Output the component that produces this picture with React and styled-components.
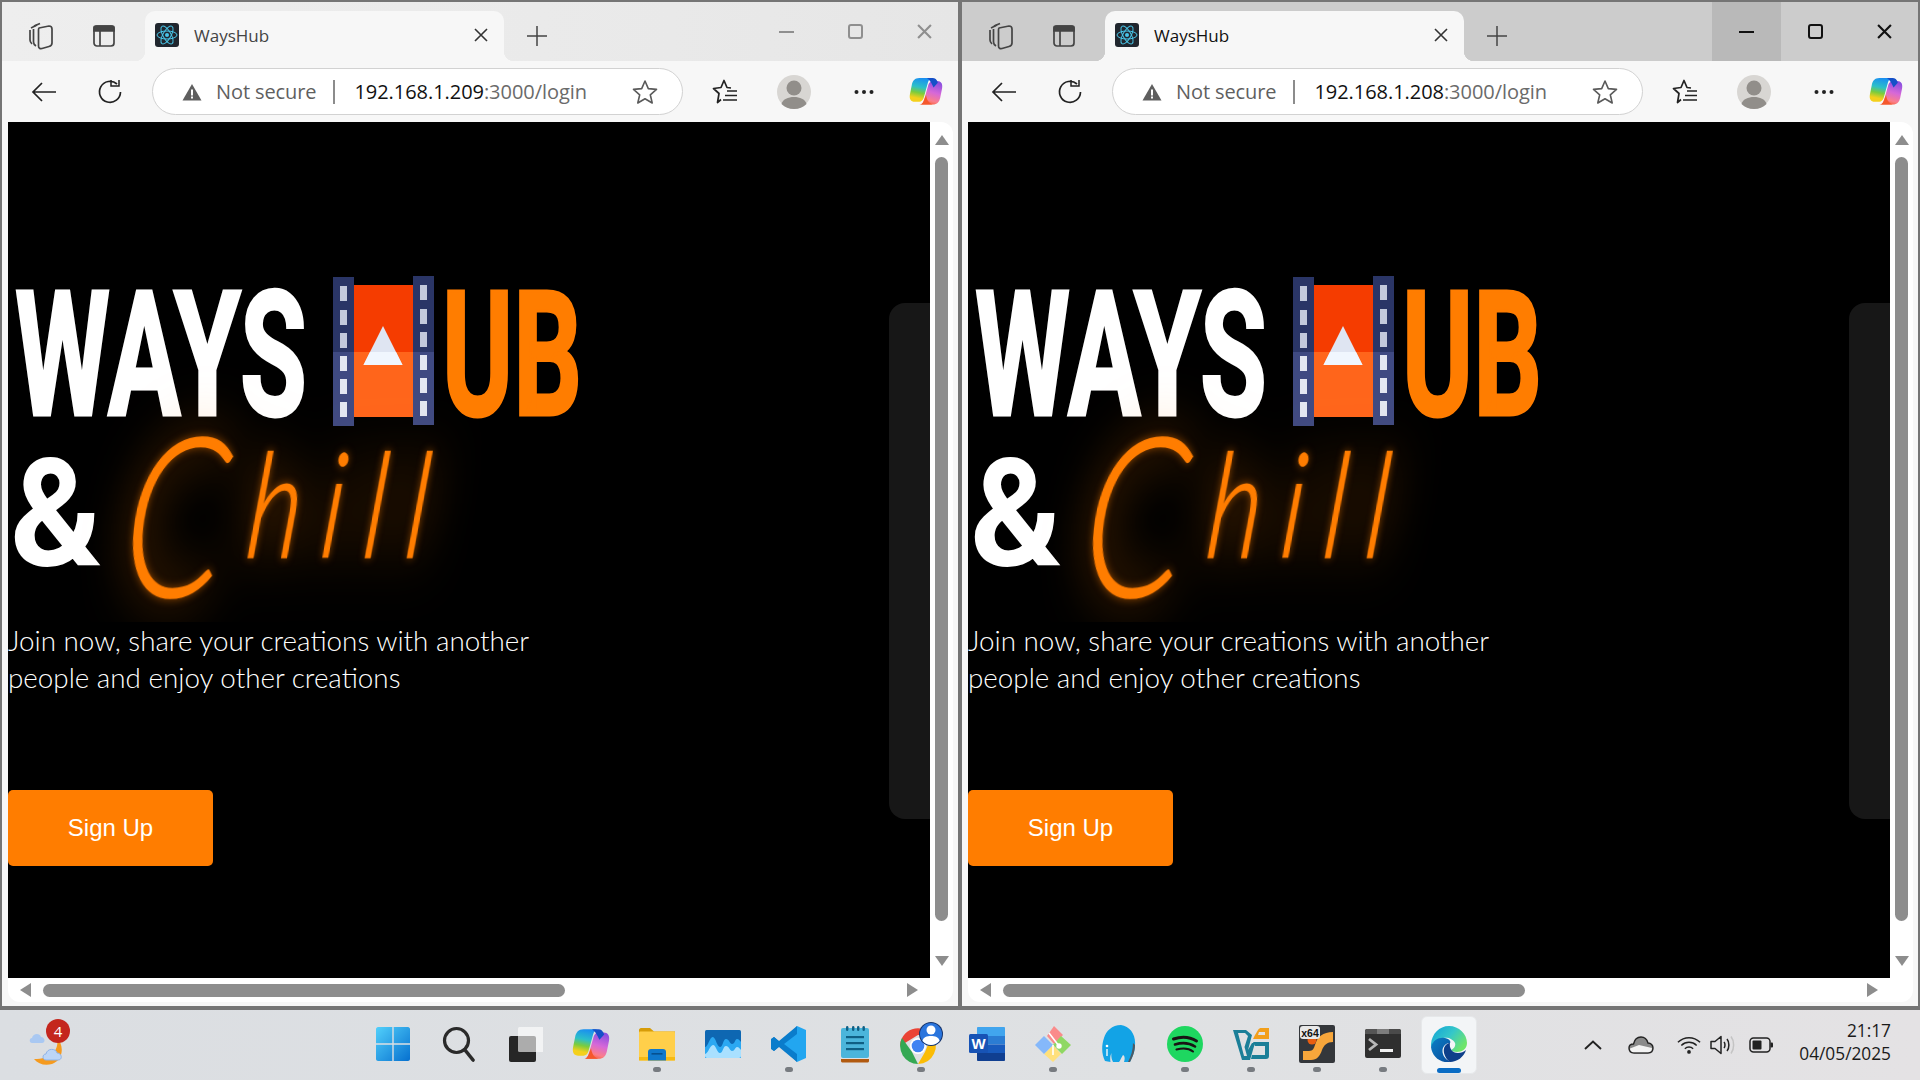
import React from 'react';
import styled, { createGlobalStyle } from 'styled-components';

const GlobalStyle = createGlobalStyle`
	html, body { margin: 0; padding: 0; background: #dcdfe3; overflow: hidden; }
	* { box-sizing: border-box; }
	svg { display: block; }
`;

const ORANGE = '#ff7d00';
const UI_FONT = '"Open Sans", "Noto Sans", sans-serif';

// ---------- chrome icons ----------
const Workspaces = () => (
	<svg width="26" height="28" viewBox="0 0 26 28" fill="none" stroke="#444" strokeWidth="1.7" strokeLinejoin="round">
		<path d="M3 6 L9 3 M2 8 V18 C2 20 3 21 4 22" />
		<path d="M6 4 L12 1.5 M5.5 7 V20 C5.5 22 6.5 23 8 24" />
		<path d="M11 6 L21 4 C23 4 24 5 24 7 V21 C24 23 23 24 21 24.5 L14 26.5 C12 27 10.5 26 10.5 24 V8 C10.5 7 10.5 6.5 11 6 Z" />
	</svg>
);

const TabList = () => (
	<svg width="22" height="22" viewBox="0 0 22 22" fill="none" stroke="#444" strokeWidth="1.7">
		<rect x="1" y="1" width="20" height="20" rx="3" />
		<path d="M1 2.5 C1 1.5 2 1 3 1 H19 C20 1 21 1.5 21 2.5 V6 H1 Z" fill="#444" />
		<path d="M7 6 V21" />
	</svg>
);

const ReactFav = () => (
	<svg width="24" height="24" viewBox="0 0 24 24" fill="none" stroke="#49c6e8" strokeWidth="1">
		<rect width="24" height="24" rx="3" fill="#20262e" stroke="none" />
		<ellipse cx="12" cy="12" rx="10" ry="4" />
		<ellipse cx="12" cy="12" rx="10" ry="4" transform="rotate(60 12 12)" />
		<ellipse cx="12" cy="12" rx="10" ry="4" transform="rotate(120 12 12)" />
		<circle cx="12" cy="12" r="2" fill="#49c6e8" stroke="none" />
	</svg>
);

const CloseX = ({ size = 14, color = '#333', width = 1.6 }) => (
	<svg width={size} height={size} viewBox="0 0 14 14" stroke={color} strokeWidth={width}>
		<path d="M1 1 L13 13 M13 1 L1 13" />
	</svg>
);

const Plus = () => (
	<svg width="22" height="22" viewBox="0 0 22 22" stroke="#444" strokeWidth="1.5">
		<path d="M11 1 V21 M1 11 H21" />
	</svg>
);

const Back = () => (
	<svg width="26" height="22" viewBox="0 0 26 22" fill="none" stroke="#222" strokeWidth="1.7">
		<path d="M25 11 H2 M11 2 L2 11 L11 20" />
	</svg>
);

const Reload = () => (
	<svg width="26" height="26" viewBox="0 0 26 26" fill="none" stroke="#222" strokeWidth="1.7">
		<path d="M20 5 A10.5 10.5 0 1 0 23.5 13" />
		<path d="M14 1 V7 H22 V1" strokeWidth="1.5" />
	</svg>
);

const Warning = () => (
	<svg width="20" height="18" viewBox="0 0 20 18">
		<path d="M10 1 L19.5 17.5 H0.5 Z" fill="#5f5f5f" />
		<rect x="9" y="6.5" width="2" height="6" fill="#fff" />
		<rect x="9" y="13.5" width="2" height="2" fill="#fff" />
	</svg>
);

const Star = () => (
	<svg width="26" height="26" viewBox="0 0 26 26" fill="none" stroke="#5a5a5a" strokeWidth="1.6" strokeLinejoin="round">
		<path d="M13 2 L16.3 9.6 L24.5 10.4 L18.3 15.8 L20.2 24 L13 19.7 L5.8 24 L7.7 15.8 L1.5 10.4 L9.7 9.6 Z" />
	</svg>
);

const Favorites = () => (
	<svg width="26" height="26" viewBox="0 0 26 26" fill="none" stroke="#222" strokeWidth="1.7" strokeLinejoin="round">
		<path d="M9 20.5 L5.5 23.5 L7 14.5 L1.5 9.5 L9 8.5 L12 1.5 L15 8.5 L19 9" />
		<path d="M15 12 H25 M13 16.5 H25 M11 21 H25" />
	</svg>
);

const Avatar = () => (
	<svg width="34" height="34" viewBox="0 0 34 34">
		<circle cx="17" cy="17" r="17" fill="#d8d6d3" />
		<circle cx="17" cy="13" r="7.5" fill="#918e8a" />
		<path d="M4.5 29 C6 24 11 22 17 22 C23 22 28 24 29.5 29 C26 32.5 22 34 17 34 C12 34 8 32.5 4.5 29 Z" fill="#918e8a" />
	</svg>
);

const Dots = () => (
	<svg width="20" height="6" viewBox="0 0 20 6" fill="#222">
		<circle cx="2.5" cy="3" r="2" />
		<circle cx="10" cy="3" r="2" />
		<circle cx="17.5" cy="3" r="2" />
	</svg>
);

const Copilot = ({ size = 34 }) => (
	<svg width={size} height={size * 0.9} viewBox="0 0 36 32">
		<defs>
			<linearGradient id="copA" x1="0.5" y1="0" x2="0.3" y2="1">
				<stop offset="0" stopColor="#1a8ff0" />
				<stop offset="0.38" stopColor="#2cc0c8" />
				<stop offset="0.62" stopColor="#7ccc3c" />
				<stop offset="0.85" stopColor="#f4d01c" />
			</linearGradient>
			<linearGradient id="copB" x1="0.6" y1="0" x2="0.3" y2="1">
				<stop offset="0" stopColor="#8a4fe0" />
				<stop offset="0.45" stopColor="#d668d8" />
				<stop offset="0.8" stopColor="#fb7f8a" />
				<stop offset="1" stopColor="#f5582c" />
			</linearGradient>
		</defs>
		<path d="M11 2 C6 2 4 5 3 9 L1 19 C0 24 2 27 6 27 H11 C13 27 15 25 15.5 23 L20 7 C21 4 22 2 25 2 Z" fill="url(#copA)" />
		<path d="M25 30 C30 30 32 27 33 23 L35 13 C36 8 34 5 30 5 H25 C23 5 21 7 20.5 9 L16 25 C15 28 14 30 11 30 Z" fill="url(#copB)" />
		<path d="M19 2 H25 C27.5 2 29.5 3.5 30.5 7 L26 12 C24 8 23 5 19 2 Z" fill="#1550c8" />
		<path d="M11 30 C14 30 15 28 16 25 L18 20 C19 25 20 28 25 30 Z" fill="#f5582c" />
	</svg>
);

// ---------- taskbar icons ----------
const StartIcon = () => (
	<svg width="36" height="36" viewBox="0 0 36 36">
		<defs>
			<linearGradient id="startG" x1="0" y1="0" x2="1" y2="1">
				<stop offset="0" stopColor="#52d0fb" />
				<stop offset="1" stopColor="#0670cf" />
			</linearGradient>
		</defs>
		<path d="M1 3 C1 2 2 1 3 1 H17.3 V17.3 H1 Z M18.7 1 H33 C34 1 35 2 35 3 V17.3 H18.7 Z M1 18.7 H17.3 V35 H3 C2 35 1 34 1 33 Z M18.7 18.7 H35 V33 C35 34 34 35 33 35 H18.7 Z" fill="url(#startG)" />
	</svg>
);

const SearchIcon = () => (
	<svg width="36" height="36" viewBox="0 0 36 36" fill="none" stroke="#2a2a2a">
		<circle cx="15.5" cy="14.5" r="12" strokeWidth="3.2" />
		<path d="M24 24 L32 34" strokeWidth="3.6" strokeLinecap="round" />
	</svg>
);

const TaskViewIcon = () => (
	<svg width="36" height="36" viewBox="0 0 36 36">
		<rect x="2" y="10" width="27" height="26" rx="2" fill="#262626" />
		<rect x="11" y="1" width="26" height="25" rx="1.5" fill="#fff" fillOpacity="0.62" />
	</svg>
);

const ExplorerIcon = () => (
	<svg width="36" height="34" viewBox="0 0 36 34">
		<path d="M0 3 C0 2 1 1 2 1 H11 L15 4.5 H36 V10 H0 Z" fill="#d79c08" />
		<rect y="4.5" width="36" height="29" rx="1" fill="#ffcf4a" />
		<rect y="30" width="36" height="3.5" fill="#f6ba12" />
		<path d="M9 33.5 V25 C9 23 10 22 12 22 H24 C26 22 27 23 27 25 V33.5 Z" fill="#0f78cc" />
		<rect x="12.5" y="26" width="11" height="1.6" fill="#06508f" />
	</svg>
);

const PhotosIcon = () => (
	<svg width="36" height="28" viewBox="0 0 36 28">
		<rect width="36" height="28" rx="1.5" fill="#0e67b2" />
		<path d="M0 17 C3 17 5 6 8 7 C11 8 12 17 15 17 C18 17 18 9 21 9 C24 9 25 14 27 14 C30 14 30 9 32 9 C34 9 35 11 36 12 V28 H0 Z" fill="#2ba8f2" />
		<path d="M0 24 C3 24 5 15 8 15 C11 15 12 23 15 23 C18 23 18 16 21 16 C24 16 25 21 27 21 C30 21 30 17 32 17 C34 17 35 19 36 20 V26 C36 27 35 28 34 28 H2 C1 28 0 27 0 26 Z" fill="#a9e0ff" />
	</svg>
);

const VsCodeIcon = () => (
	<svg width="36" height="38" viewBox="0 0 36 38">
		<path d="M26 1 L35 5 V33 L26 37 L10 21 Z" fill="#22a6f0" />
		<path d="M26 1 L26 9 L13 19 L26 29 V37 L8 22 L3 26 L0 24 V14 L3 12 L8 16 Z" fill="#0a7ccb" />
		<path d="M3 12 L0 14.5 V23.5 L3 26 L8 21.5 V16.5 Z" fill="#0a7ccb" />
	</svg>
);

const NotepadIcon = () => (
	<svg width="28" height="37" viewBox="0 0 28 37">
		<rect y="2" width="28" height="30" rx="2" fill="#4bb5db" />
		<path d="M0 33 H28 V35 C28 36 27 36.5 26 36.5 H2 C1 36.5 0 36 0 35 Z" fill="#b15a10" />
		<g fill="#0f5f84">
			<rect x="5" y="0" width="2.4" height="5" rx="1.2" />
			<rect x="11" y="0" width="2.4" height="5" rx="1.2" />
			<rect x="16" y="0" width="2.4" height="5" rx="1.2" />
			<rect x="21.5" y="0" width="2.4" height="5" rx="1.2" />
			<rect x="5" y="10" width="18" height="2.2" />
			<rect x="5" y="16" width="18" height="2.2" />
			<rect x="5" y="22" width="18" height="2.2" />
		</g>
	</svg>
);

const ChromeIcon = () => (
	<svg width="46" height="46" viewBox="0 0 46 46">
		<path d="M2 25 A18 18 0 0 1 34 14 L20 14 Z" fill="#ea4335" />
		<path d="M20 43 A18 18 0 0 1 4 17 L14 31 Z" fill="#34a853" />
		<path d="M34 14 A18 18 0 0 1 20 43 L27 31 Z" fill="#fbbc05" />
		<circle cx="20" cy="25" r="8" fill="#fff" />
		<circle cx="20" cy="25" r="6.3" fill="#3f83f2" />
		<circle cx="33" cy="13" r="12" fill="#16336b" />
		<circle cx="33" cy="13" r="11" fill="#2a75dd" />
		<circle cx="33" cy="9" r="4.5" fill="#fff" />
		<path d="M24.5 20 C25 16 29 15 33 15 C37 15 41 16 41.5 20 C39 22.5 36 24 33 24 C30 24 27 22.5 24.5 20 Z" fill="#fff" />
	</svg>
);

const WordIcon = () => (
	<svg width="36" height="34" viewBox="0 0 36 34">
		<path d="M8 1 C8 0.5 8.5 0 9 0 H35 C35.5 0 36 0.5 36 1 V9 H8 Z" fill="#41a5ee" />
		<rect x="8" y="9" width="28" height="8.5" fill="#2b7cd3" />
		<rect x="8" y="17.5" width="28" height="8.5" fill="#185abd" />
		<path d="M8 26 H36 V33 C36 33.5 35.5 34 35 34 H9 C8.5 34 8 33.5 8 33 Z" fill="#103f91" />
		<rect y="7" width="19" height="19" rx="1.5" fill="#1753b5" />
		<text x="9.5" y="22" textAnchor="middle" fontFamily="Liberation Sans, sans-serif" fontWeight="700" fontSize="15" fill="#fff">W</text>
	</svg>
);

const GitIcon = () => (
	<svg width="36" height="38" viewBox="0 0 36 38">
		<path d="M18 2 L27 11 L18 20 L11 12 Z" fill="#fa8b8b" transform="translate(1 -1)" />
		<path d="M26 11 L36 20 L27 29 L18 20 Z" fill="#8fd863" />
		<path d="M18 20 L26 29 L18 37 L9 29 Z" fill="#ffe07c" />
		<path d="M9 11 L18 20 L9 29 L0 20 Z" fill="#85b8fa" />
		<circle cx="24" cy="21" r="2.7" fill="#fff" />
		<path d="M14 8 L24 21 M18 20 L18 30" stroke="#fff" strokeWidth="1.6" />
	</svg>
);

const ElephantIcon = () => (
	<svg width="34" height="38" viewBox="0 0 34 38">
		<path d="M19 0 C28 1 34 10 33 20 C33 27 30 33 28 37 L22 37 C23 34 23 31 21 30 C19 33 18 36 17 37 L11 37 C9.5 34 9 31 9.5 28 C8 31 8 34 8.5 37 L3 36 C0 30 -1 22 2 13 C4 6 10 0 19 0 Z" fill="#12a3e6" />
		<path d="M33 20 C33 27 30 33 28 37 L26 37 C29 31 31 25 31 18 Z" fill="#4d5a63" />
		<circle cx="5" cy="21" r="1.3" fill="#fff" />
		<path d="M5 24 V31" stroke="#fff" strokeWidth="1.3" />
	</svg>
);

const SpotifyIcon = () => (
	<svg width="36" height="36" viewBox="0 0 36 36" fill="none" stroke="#191414" strokeLinecap="round">
		<circle cx="18" cy="18" r="18" fill="#1ed760" stroke="none" />
		<path d="M6.5 13 C14 10.5 23 11 29.5 15" strokeWidth="3" />
		<path d="M8 18.5 C14.5 16.5 22.5 17 28 20.5" strokeWidth="2.6" />
		<path d="M9.5 23.5 C15 22 22 22.3 26 25.5" strokeWidth="2.1" />
	</svg>
);

const VsLogoIcon = () => (
	<svg width="36" height="32" viewBox="0 0 36 32">
		<path d="M0 2 H13 L19 7 L15 22 L19 15 H22 L17 32 H9 Z M5 5 L11 28 H14 L11.5 19 L15 8 L12 5 Z" fill="#1b7f98" />
		<path d="M22 7 L25 2 C26 0.5 27 0 28 0 H36 V11 H20 Z M26 4 L25 7 H32 V4 Z" fill="#f29f1a" />
		<path d="M20 14 H36 V28 C36 30 35 31 33 31 H18 L19 27 H32 V18 H22 Z" fill="#1b7f98" />
	</svg>
);

const X64Icon = () => (
	<svg width="36" height="38" viewBox="0 0 36 38">
		<rect width="36" height="38" rx="2" fill="#34373b" />
		<path d="M34 7 V17 C28 17 25 20 23 25 C21 31 18 35 12 35 H4 V26 H10 C14 26 15 23 16 20 C18 12 24 7 34 7 Z" fill="#f7a63b" />
		<circle cx="13" cy="15" r="4.5" fill="#e85d10" />
		<rect x="1" y="1" width="20" height="13" rx="3" fill="#e8e8e8" />
		<text x="11" y="11.5" textAnchor="middle" fontFamily="Liberation Sans, sans-serif" fontWeight="700" fontSize="10.5" fill="#111">x64</text>
	</svg>
);

const TerminalIcon = () => (
	<svg width="36" height="30" viewBox="0 0 36 30">
		<rect width="36" height="29" rx="2" fill="#2f2f2f" />
		<path d="M2 0 H12 V5 H0 V2 C0 1 1 0 2 0 Z" fill="#555" />
		<rect x="12" y="0" width="12" height="5" fill="#7c7c7c" />
		<path d="M24 0 H34 C35 0 36 1 36 2 V5 H24 Z" fill="#4a4a4a" />
		<path d="M4 10 L11 15.5 L4 21" fill="none" stroke="#b8b8b8" strokeWidth="2.8" />
		<rect x="15" y="20" width="13" height="3" fill="#f0f0f0" />
	</svg>
);

const EdgeIcon = () => (
	<svg width="36" height="36" viewBox="0 0 36 36">
		<defs>
			<linearGradient id="edgeA" x1="0" y1="0" x2="1" y2="0.6">
				<stop offset="0" stopColor="#0fa0d8" />
				<stop offset="0.55" stopColor="#35c7c9" />
				<stop offset="1" stopColor="#6fe56a" />
			</linearGradient>
			<linearGradient id="edgeB" x1="0" y1="0" x2="1" y2="1">
				<stop offset="0" stopColor="#0a7fc6" />
				<stop offset="1" stopColor="#0b4a9a" />
			</linearGradient>
		</defs>
		<path d="M18 0 C28 0 36 8 36 17 C36 23 31 26 26 26 C23 26 21 25 20 24 C23 23 25 20 24 17 C22 13 17 11 12 12 C6 13 1 17 0 22 C-1 10 7 0 18 0 Z" fill="url(#edgeA)" />
		<path d="M0 21 C2 14 8 11 14 12 C19 13 20 16 19 17 C14 17 10 22 12 28 C13 32 17 35 21 36 C10 38 1 31 0 21 Z" fill="url(#edgeB)" />
		<path d="M13 27 C12 21 15 17.5 19 17 C18 22 21 27 27 27 C30 27 33 26 35 24 C33 31 26 36 19 36 C16 34 14 31 13 27 Z" fill="#0e3f8a" />
	</svg>
);

const WeatherIcon = () => (
	<svg width="38" height="42" viewBox="0 0 38 42">
		<path d="M27 13 C31 22 27 36 5 36 C9 41 16 43 23 41 C33 38 37 24 27 13 Z" fill="#f59a1e" />
		<path d="M3 20 C0 20 0 15 3 15 C4 10 11 10 12 14 C16 14 17 20 13 20 Z" fill="#a9c8f2" />
		<path d="M17 37 C13 37 13 31 17 31 C18 25 27 25 28 30 C33 30 34 37 29 37 Z" fill="#bcd5f7" stroke="#8fb4e8" strokeWidth="1" />
	</svg>
);

// ---------- tray icons ----------
const Chevron = () => (
	<svg width="18" height="10" viewBox="0 0 18 10" fill="none" stroke="#222" strokeWidth="1.9">
		<path d="M1 9 L9 1.5 L17 9" />
	</svg>
);

const Cloud = () => (
	<svg width="26" height="18" viewBox="0 0 26 18">
		<path d="M6 17 C2 17 1 14 1 12 C1 9.5 3 8 5.5 8 C6.5 3.5 9.5 1 13 1 C16.5 1 19 3.5 20 7 C23 7 25 9.5 25 12 C25 15 23 17 20 17 Z" fill="#8b8b8b" stroke="#222" strokeWidth="1.4" />
		<path d="M6 16.3 C3 16.3 2 14 2 12.5 L11 9 L24 12 C24 15 22 16.3 20 16.3 Z" fill="#f3f3f3" />
	</svg>
);

const Wifi = () => (
	<svg width="26" height="20" viewBox="0 0 26 20" fill="none" stroke="#222" strokeWidth="1.6">
		<path d="M1 7 C8 0.5 18 0.5 25 7" />
		<path d="M4.7 10.5 C9.5 6 16.5 6 21.3 10.5" />
		<path d="M8.5 14 C11 11.7 15 11.7 17.5 14" />
		<circle cx="13" cy="17.5" r="2" fill="#222" stroke="none" />
	</svg>
);

const Speaker = () => (
	<svg width="26" height="20" viewBox="0 0 26 20" fill="none" stroke="#222" strokeWidth="1.5">
		<path d="M1 6.5 H5 L11 1.5 V18.5 L5 13.5 H1 Z" strokeLinejoin="round" />
		<path d="M14 7 C15.3 8.5 15.3 11.5 14 13" />
		<path d="M17 4 C19.5 7 19.5 13 17 16" />
		<path d="M21 1.5 C24.5 6 24.5 14 21 18.5" stroke="#c4c4c4" />
	</svg>
);

const Battery = () => (
	<svg width="24" height="16" viewBox="0 0 24 16">
		<rect x="1" y="1" width="20" height="14" rx="3.5" fill="none" stroke="#222" strokeWidth="1.5" />
		<rect x="3.5" y="3.5" width="9" height="9" rx="1" fill="#222" />
		<rect x="21.5" y="5.5" width="2.5" height="5" rx="1" fill="#222" />
	</svg>
);

// ---------- logo ----------
const FILM_HOLES = [286, 310, 333, 356, 379, 402];

const LogoSvg = styled.svg`
	flex: none;
`;

const HeavyText = styled.text`
	font-family: Roboto, "Liberation Sans", sans-serif;
	font-weight: 700;
	stroke-linejoin: miter;
`;

const ScriptText = styled.text`
	font-family: Lato, "Liberation Sans", sans-serif;
	font-style: italic;
	font-weight: 300;
	fill: ${ORANGE};
	stroke: ${ORANGE};
	stroke-width: 1.5px;
	filter: drop-shadow(0 0 5px rgba(255, 125, 0, 0.5)) drop-shadow(0 0 30px rgba(255, 125, 0, 0.55));
`;

const HillSpan = styled.tspan`
	letter-spacing: 28px;
`;

// origin of the svg is (8, 262) on the page
const Logo = () => (
	<LogoSvg width="600" height="360" viewBox="0 0 600 360">
		<HeavyText x="7" y="152.5" fontSize="174" fill="#fff" stroke="#fff" strokeWidth="3" textLength="292" lengthAdjust="spacingAndGlyphs">WAYS</HeavyText>
		<rect x="325" y="15" width="21" height="75" fill="#2a3566" />
		<rect x="325" y="90" width="21" height="74" fill="#3f4a82" />
		<rect x="346" y="23" width="61" height="67" fill="#f53c00" />
		<rect x="346" y="90" width="61" height="65" fill="#ff651b" />
		<rect x="405" y="14" width="21" height="76" fill="#2a3566" />
		<rect x="405" y="90" width="21" height="73" fill="#3f4a82" />
		{FILM_HOLES.map((y) => (
			<g key={y} fill={y < 350 ? '#c3c9dc' : '#e3e7f2'}>
				<rect x="332" y={y - 262} width="7" height="15" />
				<rect x="412" y={y - 263} width="7" height="15" />
			</g>
		))}
		<path d="M375 64 L394.5 103 H355.5 Z" fill="#dfe5f2" />
		<path d="M362 90 H388 L394.5 103 H355.5 Z" fill="#f0f6fe" />
		<HeavyText x="434" y="152.5" fontSize="174" fill={ORANGE} stroke={ORANGE} strokeWidth="3" textLength="140" lengthAdjust="spacingAndGlyphs">UB</HeavyText>
		<HeavyText x="2" y="303" fontSize="150" fill="#fff" textLength="92" lengthAdjust="spacingAndGlyphs">&amp;</HeavyText>
		<ScriptText transform="translate(144 0) scale(0.72 1) skewX(-8)" fontSize="146">
			<tspan x="0" y="334" fontSize="222">C</tspan>
			<HillSpan x="169" y="296">hill</HillSpan>
		</ScriptText>
	</LogoSvg>
);

// ---------- browser ----------
const Window = styled.div`
	width: 960px;
	height: 1010px;
	border: solid #757575;
	border-width: 2px 2px 4px 2px;
	background: #f7f7f7;
	display: flex;
	flex-direction: column;
	font-family: ${UI_FONT};
`;

const TabStrip = styled.div`
	height: 59px;
	display: flex;
	align-items: flex-end;
	padding-left: 8px;
	background: ${(p) => (p.$active ? '#cccccc' : 'linear-gradient(to right, #eeeeee, #e9e9e9 70%, #e6e6e6)')};
`;

const StripButton = styled.div`
	width: ${(p) => p.$w || 62}px;
	height: 50px;
	flex: none;
	display: flex;
	align-items: center;
	justify-content: center;
	margin-left: ${(p) => p.$ml || 0}px;
`;

const Tab = styled.div`
	width: 359px;
	height: 50px;
	flex: none;
	margin-left: 10px;
	padding: 0 16px 2px 10px;
	position: relative;
	display: flex;
	align-items: center;
	background: #f7f7f7;
	border-radius: 10px 10px 0 0;
	&::before, &::after {
		content: '';
		position: absolute;
		bottom: 0;
		width: 10px;
		height: 10px;
	}
	&::before {
		left: -10px;
		background: radial-gradient(circle at 0 0, transparent 10px, #f7f7f7 10.5px);
	}
	&::after {
		right: -10px;
		background: radial-gradient(circle at 100% 0, transparent 10px, #f7f7f7 10.5px);
	}
`;

const TabTitle = styled.span`
	flex: 1;
	margin-left: 15px;
	font-size: 17px;
	color: ${(p) => (p.$active ? '#111' : '#444')};
`;

const WinControls = styled.div`
	margin-left: auto;
	margin-right: -1px;
	align-self: stretch;
	display: flex;
`;

const WinButton = styled.div`
	width: 69px;
	display: flex;
	align-items: center;
	justify-content: center;
	background: ${(p) => (p.$hover ? '#b9b9b9' : 'transparent')};
`;

const MinLine = styled.div`
	width: 15px;
	height: 2px;
	background: ${(p) => p.$color};
`;

const MaxBox = styled.div`
	width: 15px;
	height: 15px;
	border: 2px solid ${(p) => p.$color};
	border-radius: 3px;
`;

const Toolbar = styled.div`
	height: 61px;
	flex: none;
	display: flex;
	align-items: center;
	padding-left: 9px;
`;

const ToolButton = styled.div`
	width: ${(p) => p.$w || 66}px;
	height: 47px;
	flex: none;
	display: flex;
	align-items: center;
	justify-content: center;
`;

const Address = styled.div`
	width: 531px;
	height: 47px;
	flex: none;
	margin: 0 8px 0 9px;
	padding: 0 24px 0 29px;
	display: flex;
	align-items: center;
	background: #fff;
	border: 1.5px solid #d2d2d2;
	border-radius: 24px;
	font-size: 20px;
`;

const NotSecure = styled.span`
	margin-left: 14px;
	color: #5f5f5f;
	letter-spacing: -0.1px;
`;

const Divider = styled.div`
	width: 2px;
	height: 24px;
	margin: 0 19px 0 17px;
	background: #8c8c8c;
`;

const Url = styled.span`
	flex: 1;
	color: #6a6a6a;
	white-space: nowrap;
	letter-spacing: -0.05px;
	b {
		font-weight: 400;
		color: #111;
	}
`;

const Viewport = styled.div`
	width: 945px;
	height: 880px;
	margin-left: 6px;
	background: #fff;
	border-radius: 0 12px 12px 12px;
	overflow: hidden;
	display: flex;
	flex-direction: column;
`;

const ViewRow = styled.div`
	height: 856px;
	display: flex;
`;

const Page = styled.div`
	width: 922px;
	flex: none;
	position: relative;
	background: #000;
	padding-top: 140px;
`;

const SidePanel = styled.div`
	position: absolute;
	right: 0;
	top: 181px;
	width: 41px;
	height: 516px;
	background: #171717;
	border-radius: 16px 0 0 16px;
`;

const Tagline = styled.p`
	margin: 0;
	width: 540px;
	color: #fff;
	font-family: Lato, sans-serif;
	font-weight: 300;
	font-size: 27.8px;
	line-height: 37px;
`;

const SignUp = styled.button`
	display: block;
	width: 205px;
	height: 76px;
	margin-top: 94px;
	border: 0;
	border-radius: 5px;
	background: ${ORANGE};
	color: #fff;
	font-family: "Liberation Sans", sans-serif;
	font-size: 24px;
`;

const VScroll = styled.div`
	flex: 1;
	padding: 13px 0 11px;
	display: flex;
	flex-direction: column;
	align-items: center;
`;

const VThumb = styled.div`
	width: 13px;
	height: 764px;
	margin: 12px 0 35px;
	background: #8d8d8d;
	border-radius: 7px;
`;

const Arrow = styled.div`
	width: 0;
	height: 0;
	flex: none;
	border-style: solid;
	border-color: transparent;
	border-width: ${(p) => (p.$dir === 'up' || p.$dir === 'down' ? '0 7.5px' : '7px 0')};
	${(p) => p.$dir === 'up' && 'border-bottom: 10px solid #8d8d8d;'}
	${(p) => p.$dir === 'down' && 'border-top: 10px solid #8d8d8d;'}
	${(p) => p.$dir === 'left' && 'border-right: 11px solid #8d8d8d;'}
	${(p) => p.$dir === 'right' && 'border-left: 11px solid #8d8d8d;'}
`;

const HScroll = styled.div`
	flex: 1;
	padding: 0 0 0 12px;
	display: flex;
	align-items: center;
`;

const HThumb = styled.div`
	width: 522px;
	height: 13px;
	margin: 0 342px 0 12px;
	background: #8d8d8d;
	border-radius: 7px;
`;

const Browser = ({ ip, active }) => {
	const ctl = active ? '#111' : '#8f8f8f';
	return (
		<Window>
			<TabStrip $active={active}>
				<StripButton><Workspaces /></StripButton>
				<StripButton $ml={1}><TabList /></StripButton>
				<Tab>
					<ReactFav />
					<TabTitle $active={active}>WaysHub</TabTitle>
					<CloseX />
				</Tab>
				<StripButton $w={66}><Plus /></StripButton>
				<WinControls>
					<WinButton $hover={active}><MinLine $color={ctl} /></WinButton>
					<WinButton><MaxBox $color={ctl} /></WinButton>
					<WinButton><CloseX size={15} color={ctl} width={2} /></WinButton>
				</WinControls>
			</TabStrip>
			<Toolbar>
				<ToolButton><Back /></ToolButton>
				<ToolButton><Reload /></ToolButton>
				<Address>
					<Warning />
					<NotSecure>Not secure</NotSecure>
					<Divider />
					<Url><b>{ip}</b>:3000/login</Url>
					<Star />
				</Address>
				<ToolButton $w={67}><Favorites /></ToolButton>
				<ToolButton $w={71}><Avatar /></ToolButton>
				<ToolButton $w={69}><Dots /></ToolButton>
				<ToolButton $w={55}><Copilot /></ToolButton>
			</Toolbar>
			<Viewport>
				<ViewRow>
					<Page>
						<Logo />
						<Tagline>Join now, share your creations with another people and enjoy other creations</Tagline>
						<SignUp>Sign Up</SignUp>
						<SidePanel />
					</Page>
					<VScroll>
						<Arrow $dir="up" />
						<VThumb />
						<Arrow $dir="down" />
					</VScroll>
				</ViewRow>
				<HScroll>
					<Arrow $dir="left" />
					<HThumb />
					<Arrow $dir="right" />
				</HScroll>
			</Viewport>
		</Window>
	);
};

// ---------- taskbar ----------
const Desktop = styled.div`
	width: 1920px;
	height: 1080px;
	display: flex;
	flex-direction: column;
	overflow: hidden;
`;

const Windows = styled.div`
	display: flex;
`;

const Taskbar = styled.div`
	height: 70px;
	display: flex;
	background: linear-gradient(to right, #dbdee2, #dfe1e3 60%, #e4e2e4);
	font-family: ${UI_FONT};
`;

const WeatherSlot = styled.div`
	width: 360px;
	flex: none;
	position: relative;
	padding: 13px 0 0 29px;
`;

const Badge = styled.div`
	position: absolute;
	left: 46px;
	top: 9px;
	width: 24px;
	height: 24px;
	border-radius: 50%;
	background: #c4261d;
	color: #fff;
	font-size: 15px;
	line-height: 24px;
	text-align: center;
`;

const TaskItem = styled.div`
	width: 66px;
	height: 70px;
	flex: none;
	position: relative;
	display: flex;
	align-items: center;
	justify-content: center;
	padding-bottom: 2px;
	&::before {
		content: '';
		display: ${(p) => (p.$active ? 'block' : 'none')};
		position: absolute;
		left: 5px;
		right: 5px;
		top: 6px;
		bottom: 6px;
		background: #f3f5f7;
		border: 1px solid #e6e8ea;
		border-radius: 6px;
	}
	&::after {
		content: '';
		display: ${(p) => (p.$active || p.$dot ? 'block' : 'none')};
		position: absolute;
		left: 50%;
		bottom: ${(p) => (p.$active ? '7px' : '8px')};
		width: ${(p) => (p.$active ? '24px' : '8px')};
		height: 5px;
		margin-left: ${(p) => (p.$active ? '-12px' : '-4px')};
		border-radius: 3px;
		background: ${(p) => (p.$active ? '#0a6cc4' : '#777b80')};
	}
	svg {
		position: relative;
		z-index: 1;
	}
`;

const Tray = styled.div`
	flex: 1;
	display: flex;
	align-items: center;
	padding-left: 99px;
`;

const TrayIcon = styled.div`
	width: ${(p) => p.$w}px;
	flex: none;
	display: flex;
	justify-content: center;
`;

const Clock = styled.div`
	margin-left: auto;
	padding: 0 29px 6px 0;
	text-align: right;
	font-size: 17.3px;
	line-height: 23px;
	color: #1a1a1a;
`;

const TASK_ITEMS = [
	{ key: 'start', icon: <StartIcon /> },
	{ key: 'search', icon: <SearchIcon /> },
	{ key: 'view', icon: <TaskViewIcon /> },
	{ key: 'copilot', icon: <Copilot size={38} /> },
	{ key: 'explorer', icon: <ExplorerIcon />, dot: true },
	{ key: 'photos', icon: <PhotosIcon /> },
	{ key: 'code', icon: <VsCodeIcon />, dot: true },
	{ key: 'notepad', icon: <NotepadIcon /> },
	{ key: 'chrome', icon: <ChromeIcon />, dot: true },
	{ key: 'word', icon: <WordIcon /> },
	{ key: 'git', icon: <GitIcon />, dot: true },
	{ key: 'mysql', icon: <ElephantIcon /> },
	{ key: 'spotify', icon: <SpotifyIcon />, dot: true },
	{ key: 'vs', icon: <VsLogoIcon />, dot: true },
	{ key: 'x64', icon: <X64Icon />, dot: true },
	{ key: 'term', icon: <TerminalIcon />, dot: true },
	{ key: 'edge', icon: <EdgeIcon />, active: true },
];

export default function App() {
	return (
		<Desktop>
			<GlobalStyle />
			<Windows>
				<Browser ip="192.168.1.209" />
				<Browser ip="192.168.1.208" active />
			</Windows>
			<Taskbar>
				<WeatherSlot>
					<WeatherIcon />
					<Badge>4</Badge>
				</WeatherSlot>
				{TASK_ITEMS.map((t) => (
					<TaskItem key={t.key} $dot={t.dot} $active={t.active}>{t.icon}</TaskItem>
				))}
				<Tray>
					<TrayIcon $w={24}><Chevron /></TrayIcon>
					<TrayIcon $w={72}><Cloud /></TrayIcon>
					<TrayIcon $w={24}><Wifi /></TrayIcon>
					<TrayIcon $w={44}><Speaker /></TrayIcon>
					<TrayIcon $w={32}><Battery /></TrayIcon>
					<Clock>21:17<br />04/05/2025</Clock>
				</Tray>
			</Taskbar>
		</Desktop>
	);
}
